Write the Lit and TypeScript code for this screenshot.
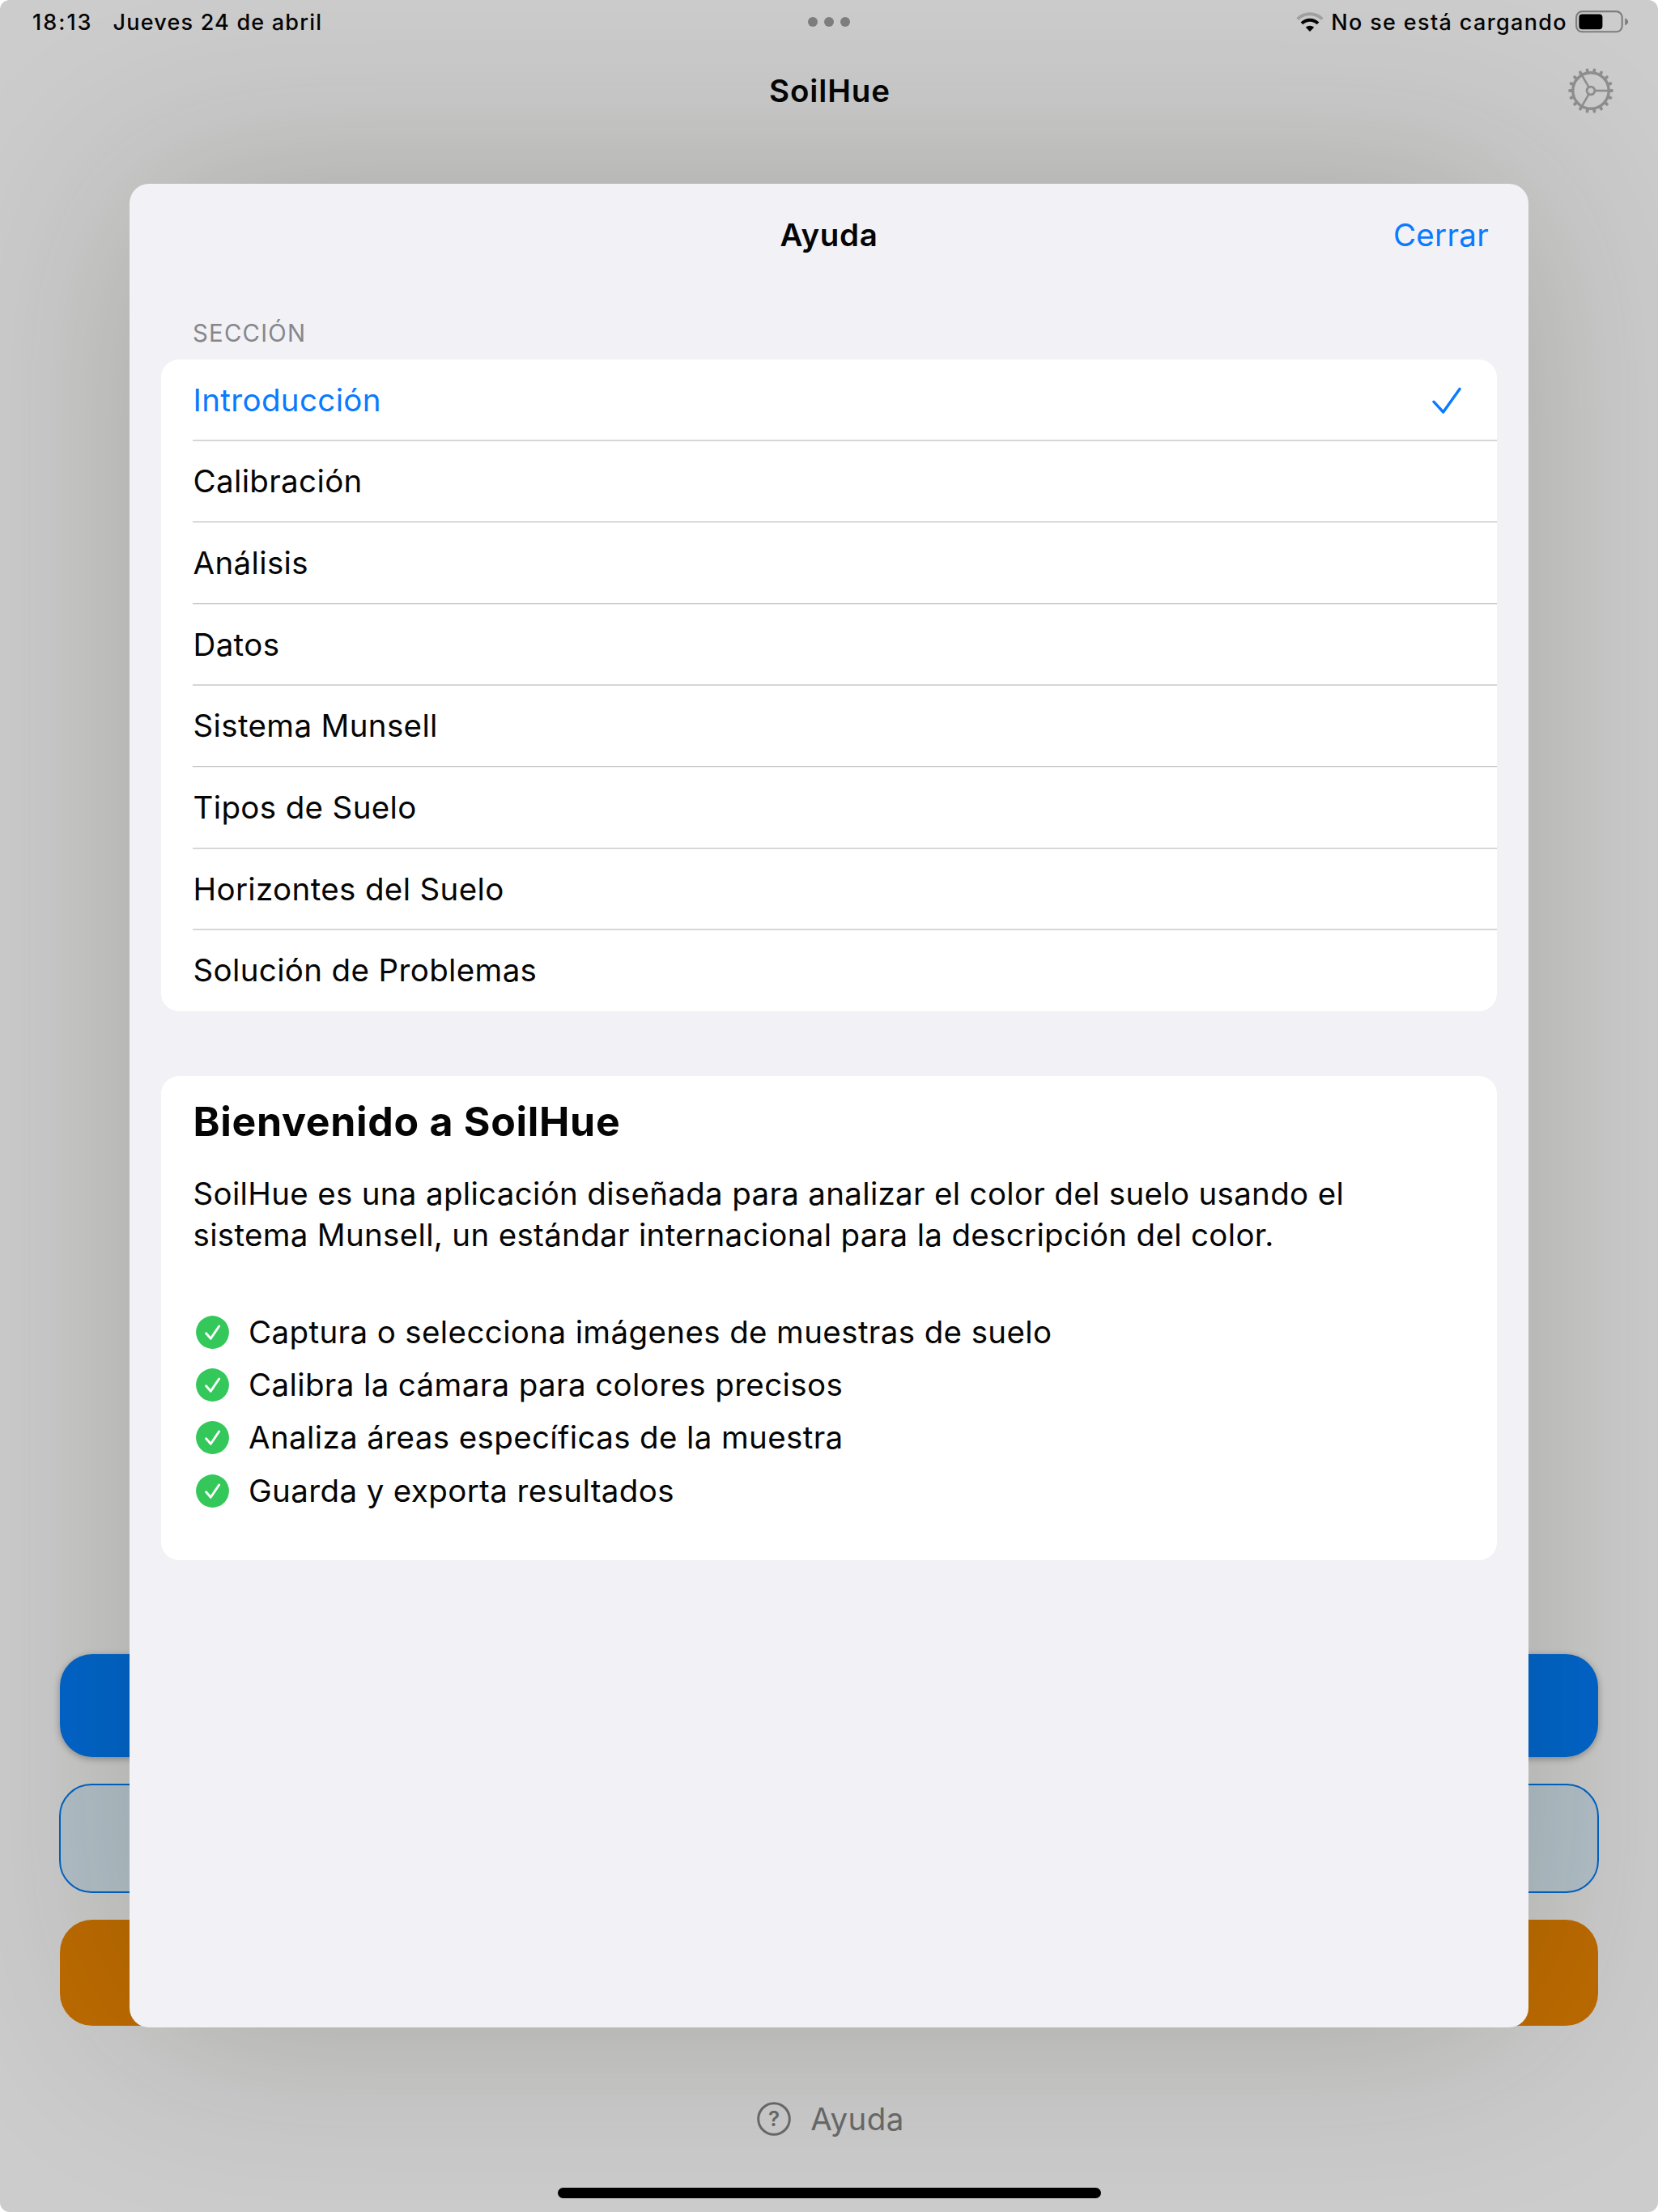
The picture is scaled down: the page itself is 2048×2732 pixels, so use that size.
import { LitElement, html, css, svg } from "lit";
import { customElement, property } from "lit/decorators.js";

const SECTIONS = [
  "Introducción",
  "Calibración",
  "Análisis",
  "Datos",
  "Sistema Munsell",
  "Tipos de Suelo",
  "Horizontes del Suelo",
  "Solución de Problemas",
];

const FEATURES = [
  "Captura o selecciona imágenes de muestras de suelo",
  "Calibra la cámara para colores precisos",
  "Analiza áreas específicas de la muestra",
  "Guarda y exporta resultados",
];

const polar = (deg: number, r: number) => {
  const a = (deg * Math.PI) / 180;
  return { x: r * Math.cos(a), y: r * Math.sin(a) };
};

const gearIcon = () => {
  const teeth = Array.from({ length: 18 }, (_, i) => {
    const a = polar(i * 20, 23);
    const b = polar(i * 20, 26);
    return svg`<line x1=${a.x} y1=${a.y} x2=${b.x} y2=${b.y} stroke-width="3.8" stroke-linecap="round"></line>`;
  });
  const arms = [0, 120, 240].map((d) => {
    const a = polar(d, 5);
    const b = polar(d, 22);
    return svg`<line x1=${a.x} y1=${a.y} x2=${b.x} y2=${b.y} stroke-width="2.6"></line>`;
  });
  return html`<svg class="gear" viewBox="-28 -28 56 56" fill="none" stroke="#8f8f8f">
    <circle r="22.2" stroke-width="3.4"></circle>
    <circle r="4.9" stroke-width="2.8"></circle>
    ${teeth}${arms}
  </svg>`;
};

@customElement("status-bar")
class StatusBar extends LitElement {
  static styles = css`
    :host {
      display: grid;
      grid-template-columns: 1fr auto 1fr;
      align-items: center;
      height: 54px;
      padding: 0 36px 0 40px;
      font-size: 27px;
      font-weight: 500;
      color: #050505;
    }
    .left {
      display: flex;
      gap: 25px;
    }
    .time {
      letter-spacing: 2px;
    }
    .date {
      letter-spacing: 1.2px;
    }
    .dots {
      display: flex;
      gap: 8px;
      margin-right: 4px;
    }
    .dot {
      width: 12px;
      height: 12px;
      border-radius: 50%;
      background: #7e7e7e;
    }
    .right {
      display: flex;
      justify-content: flex-end;
      align-items: center;
    }
    .charge {
      margin: 0 10px 0 9px;
      letter-spacing: 1.35px;
    }
    svg {
      display: block;
    }
  `;
  render() {
    return html`
      <div class="left"><span class="time">18:13</span><span class="date">Jueves 24 de abril</span></div>
      <div class="dots"><i class="dot"></i><i class="dot"></i><i class="dot"></i></div>
      <div class="right">
        <svg width="34" height="26" viewBox="0 0 34 26" fill="none">
          <path d="M1.7 9.6a21.8 21.8 0 0 1 30.6 0" stroke="#a2a2a2" stroke-width="4"></path>
          <path d="M7 14.9a14.2 14.2 0 0 1 20 0" stroke="#050505" stroke-width="4"></path>
          <path d="M11.8 19.8a7.4 7.4 0 0 1 10.4 0L17 25z" fill="#050505"></path>
        </svg>
        <span class="charge">No se está cargando</span>
        <svg width="66" height="28" viewBox="0 0 66 28">
          <rect x="1.1" y="1.1" width="56.6" height="25.2" rx="7.4" fill="none" stroke="#7d7d7d" stroke-width="2.1"></rect>
          <rect x="4.4" y="4.4" width="29" height="18.8" rx="4" fill="#000"></rect>
          <path d="M61.2 9.4c2.4.8 3.9 2.4 3.9 4.4s-1.5 3.6-3.9 4.4z" fill="#7d7d7d"></path>
        </svg>
      </div>
    `;
  }
}

@customElement("section-list")
class SectionList extends LitElement {
  @property({ type: Number }) selected = 0;
  static styles = css`
    :host {
      display: block;
      background: #fff;
      border-radius: 22px;
      overflow: hidden;
      padding-left: 39px;
    }
    .row {
      box-sizing: border-box;
      height: 100.67px;
      display: flex;
      align-items: center;
      justify-content: space-between;
      padding: 0 43px 1px 0.5px;
      color: #050505;
      letter-spacing: 0.36px;
    }
    .check {
      margin-top: 2px;
    }
    .line {
      height: 1px;
      margin-top: -1px;
      background: #c2c2c4;
      box-shadow: 0 1px 0 #eeeeef;
    }
    .soft {
      height: 2px;
      margin-top: -2px;
      background: #d6d6d8;
      box-shadow: none;
    }
    .active {
      color: #0a7aff;
    }
  `;
  render() {
    return SECTIONS.map((name, i) => {
      const active = i === this.selected;
      return html`<div class=${active ? "row active" : "row"}>
          <span>${name}</span>
          ${active
            ? html`<svg class="check" width="38" height="34" viewBox="0 0 38 34" fill="none" stroke="#0a7aff" stroke-width="3.4" stroke-linecap="round" stroke-linejoin="round">
                <path d="M3 18.2l11.7 12.8L35 2.4"></path>
              </svg>`
            : null}
        </div>
        ${i < SECTIONS.length - 1 ? html`<div class=${i % 3 === 0 ? "line soft" : "line"}></div>` : null}`;
    });
  }
}

@customElement("help-sheet")
class HelpSheet extends LitElement {
  static styles = css`
    :host {
      box-sizing: border-box;
      display: flex;
      flex-direction: column;
      background: #f1f1f6;
      border-radius: 24px;
      padding: 0 39px 0 39px;
      box-shadow: 0 0 280px rgba(20, 32, 0, 0.2);
    }
    .bar {
      display: grid;
      grid-template-columns: 1fr auto 1fr;
      align-items: center;
      height: 126px;
      padding-right: 10px;
    }
    .title {
      grid-column: 2;
      font-weight: 600;
      padding-left: 10px;
      color: #050505;
      letter-spacing: 0.6px;
    }
    .close {
      justify-self: end;
      color: #0a7aff;
      letter-spacing: 0.3px;
    }
    .caption {
      margin: 40px 0 14px 39px;
      height: 37px;
      line-height: 37px;
      font-size: 29.3px;
      letter-spacing: 1.25px;
      color: #87878b;
    }
    .card {
      box-sizing: border-box;
      margin-top: 80px;
      height: 598px;
      background: #fff;
      border-radius: 22px;
      padding: 26px 39px 0 39.5px;
      color: #050505;
    }
    .heading {
      font-size: 50px;
      line-height: 60px;
      font-weight: 700;
      letter-spacing: 0.7px;
      margin: 0;
    }
    .text {
      margin: 34px 0 0;
      line-height: 50.5px;
      letter-spacing: 0.32px;
      white-space: pre-line;
    }
    .features {
      display: flex;
      flex-direction: column;
      margin-top: 63px;
    }
    .item {
      display: flex;
      align-items: center;
      height: 65.1px;
      gap: 24px;
      padding-left: 3.5px;
      letter-spacing: 0.38px;
    }
    .label {
      margin-top: -1px;
    }
    svg {
      display: block;
      flex: none;
    }
  `;
  render() {
    return html`
      <div class="bar"><span class="title">Ayuda</span><span class="close">Cerrar</span></div>
      <div class="caption">SECCIÓN</div>
      <section-list></section-list>
      <div class="card">
        <h1 class="heading">Bienvenido a SoilHue</h1>
        <p class="text">SoilHue es una aplicación diseñada para analizar el color del suelo usando el
sistema Munsell, un estándar internacional para la descripción del color.</p>
        <div class="features">
          ${FEATURES.map(
            (f) => html`<div class="item">
              <svg width="41" height="41" viewBox="0 0 41 41" fill="none">
                <circle cx="20.5" cy="20.5" r="20.4" fill="#34c759"></circle>
                <path d="M12.6 21.8l5.7 6.5L28.6 13" stroke="#fff" stroke-width="2.9" stroke-linecap="round" stroke-linejoin="round"></path>
              </svg>
              <span class="label">${f}</span>
            </div>`
          )}
        </div>
      </div>
    `;
  }
}

@customElement("app-root")
class AppRoot extends LitElement {
  static styles = css`
    :host {
      display: block;
      background: #fff;
      font-family: Inter, "Liberation Sans", sans-serif;
      font-size: 38.5px;
      color: #050505;
    }
    .screen {
      position: relative;
      box-sizing: border-box;
      width: 2048px;
      height: 2732px;
      display: flex;
      flex-direction: column;
      background: #ccc;
      border-radius: 12px;
      overflow: hidden;
    }
    .nav {
      display: grid;
      grid-template-columns: 1fr auto 1fr;
      align-items: center;
      height: 116px;
      padding: 0 55px;
    }
    .name {
      grid-column: 2;
      font-weight: 600;
      letter-spacing: 0.9px;
      padding: 0 0 1px 2px;
    }
    .gear {
      width: 56px;
      height: 56px;
      justify-self: end;
      display: block;
    }
    .actions {
      display: flex;
      flex-direction: column;
      margin: auto 74px 0;
    }
    .btn {
      box-sizing: border-box;
      border-radius: 40px;
    }
    .primary {
      height: 127px;
      background: #0065cc;
      box-shadow: 0 2px 9px rgba(0, 0, 0, 0.32);
    }
    .secondary {
      height: 135px;
      margin: 33px -1px;
      background: #b4c1ca;
      border: 2px solid #0064c8;
    }
    .warning {
      height: 131px;
      background: #be6b00;
    }
    .help {
      display: flex;
      align-items: center;
      justify-content: center;
      gap: 24px;
      height: 40px;
      margin: 95px 0 65px;
      padding-left: 4px;
      color: #6a6a6a;
      letter-spacing: 0.4px;
    }
    .home {
      width: 671px;
      height: 13px;
      border-radius: 7px;
      background: #000;
      margin: 0 auto 17px;
    }
    .sheet {
      position: absolute;
      left: 160px;
      top: 227px;
      width: 1728px;
      height: 2277px;
    }
    .qmark {
      font-size: 26px;
      font-weight: 600;
      letter-spacing: 0;
    }
  `;
  render() {
    return html`
      <div class="screen">
        <status-bar></status-bar>
        <div class="nav"><span class="name">SoilHue</span>${gearIcon()}</div>
        <div class="actions">
          <div class="btn primary"></div>
          <div class="btn secondary"></div>
          <div class="btn warning"></div>
        </div>
        <div class="help">
          <svg width="42" height="42" viewBox="0 0 42 42" fill="none">
            <circle cx="21" cy="21" r="19.3" stroke="#6a6a6a" stroke-width="3"></circle>
            <text class="qmark" x="21" y="30.3" text-anchor="middle" fill="#6a6a6a">?</text>
          </svg>
          <span>Ayuda</span>
        </div>
        <div class="home"></div>
        <help-sheet class="sheet"></help-sheet>
      </div>
    `;
  }
}
